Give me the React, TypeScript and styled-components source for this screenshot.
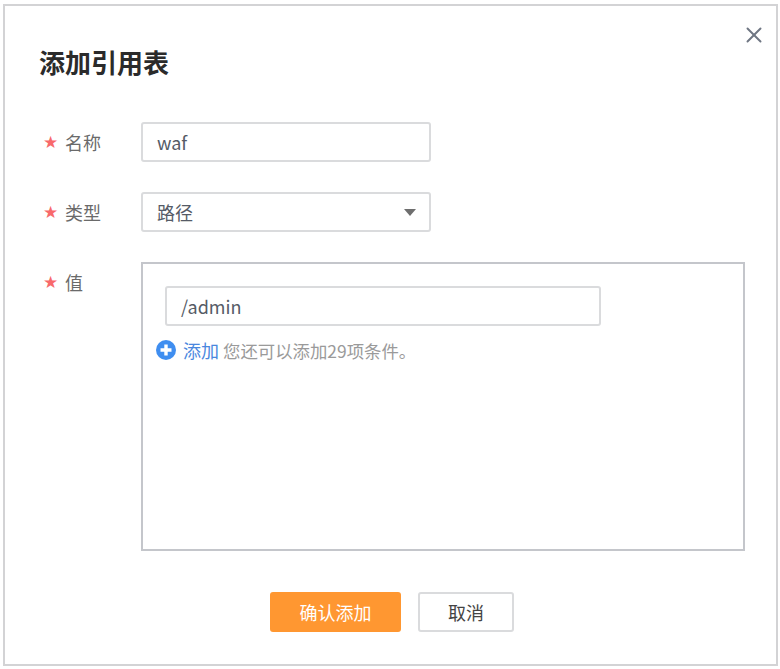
import React from "react";
import styled, { createGlobalStyle } from "styled-components";
import { X } from "lucide-react";

const FONT = `"Noto Sans CJK SC", "Noto Sans", sans-serif`;

const Global = createGlobalStyle`
  html, body { margin: 0; padding: 0; background: #fff; }
  * { box-sizing: border-box; }
  body { font-family: ${FONT}; }
`;

const Dialog = styled.div`
  width: 775px;
  height: 662px;
  margin: 4px 0 0 3px;
  border: 2px solid #d3d3d5;
  padding: 39px 30px 0 37px;
  position: relative;
  background: #fff;
`;

const Close = styled.button`
  position: absolute;
  top: 15px;
  right: 8px;
  width: 28px;
  height: 28px;
  padding: 0;
  border: none;
  background: none;
  color: #6f7683;
  display: flex;
  align-items: center;
  justify-content: center;
`;

const Title = styled.h2`
  margin: 0 0 0 -3px;
  font-size: 26px;
  line-height: 34px;
  font-weight: 700;
  color: #2b2b2b;
`;

const Form = styled.div`
  margin-top: 43px;
  display: flex;
  flex-direction: column;
  gap: 30px;
`;

const Row = styled.div`
  display: flex;
  align-items: flex-start;
`;

const Label = styled.label`
  width: 99px;
  height: 40px;
  padding-left: 1px;
  display: flex;
  align-items: center;
  font-size: 18px;
  color: #6a6a6a;
`;

const Star = styled.span`
  width: 22px;
  color: #f8696b;
  font-size: 17px;
  font-family: "DejaVu Sans", sans-serif;
`;

const Field = styled.div<{ $width: number }>`
  width: ${(p) => p.$width}px;
  height: 40px;
  border: 2px solid #dadbdd;
  border-radius: 3px;
  padding: 0 14px;
  display: flex;
  align-items: center;
  justify-content: space-between;
  font-size: 18px;
  color: #555b66;
  background: #fff;
`;

const Caret = styled.span`
  width: 0;
  height: 0;
  border-left: 6px solid transparent;
  border-right: 6px solid transparent;
  border-top: 7px solid #6e6e6e;
  margin-right: -1px;
`;

const ValueBox = styled.div`
  width: 604px;
  height: 289px;
  border: 2px solid #c4c6cb;
  padding: 22px 13px;
`;

const InnerIndent = styled.div`
  padding-left: 9px;
`;

const AddRow = styled.div`
  margin-top: 12px;
  height: 24px;
  display: flex;
  align-items: center;
  font-size: 17.4px;
  color: #9a9a9a;
`;

const PlusIcon = styled.svg`
  width: 20px;
  height: 20px;
  margin-right: 7px;
  flex: none;
`;

const AddLink = styled.span`
  font-size: 18px;
  color: #4a87de;
  margin-right: 4px;
`;

const Footer = styled.div`
  margin-top: 41px;
  padding-left: 228px;
  display: flex;
  gap: 17px;
`;

const Primary = styled.button`
  width: 131px;
  height: 40px;
  border: none;
  border-radius: 3px;
  background: #ff9731;
  color: #fff;
  font-family: ${FONT};
  font-size: 18px;
`;

const Secondary = styled.button`
  width: 96px;
  height: 40px;
  border: 2px solid #dadbdd;
  border-radius: 3px;
  background: #fff;
  color: #444;
  font-family: ${FONT};
  font-size: 18px;
`;

export default function App() {
  return (
    <>
      <Global />
      <Dialog>
        <Close aria-label="关闭">
          <X size={26} strokeWidth={1.8} />
        </Close>
        <Title>添加引用表</Title>
        <Form>
          <Row>
            <Label><Star>★</Star>名称</Label>
            <Field $width={290}>waf</Field>
          </Row>
          <Row>
            <Label><Star>★</Star>类型</Label>
            <Field $width={290}>路径<Caret /></Field>
          </Row>
          <Row>
            <Label><Star>★</Star>值</Label>
            <ValueBox>
              <InnerIndent>
                <Field $width={436}>/admin</Field>
              </InnerIndent>
              <AddRow>
                <PlusIcon viewBox="0 0 20 20">
                  <circle cx="10" cy="10" r="10" fill="#3f8ef0" />
                  <path d="M10 4.5v11M4.5 10h11" stroke="#fff" strokeWidth="3.4" />
                </PlusIcon>
                <AddLink>添加</AddLink>
                您还可以添加29项条件。
              </AddRow>
            </ValueBox>
          </Row>
        </Form>
        <Footer>
          <Primary>确认添加</Primary>
          <Secondary>取消</Secondary>
        </Footer>
      </Dialog>
    </>
  );
}
